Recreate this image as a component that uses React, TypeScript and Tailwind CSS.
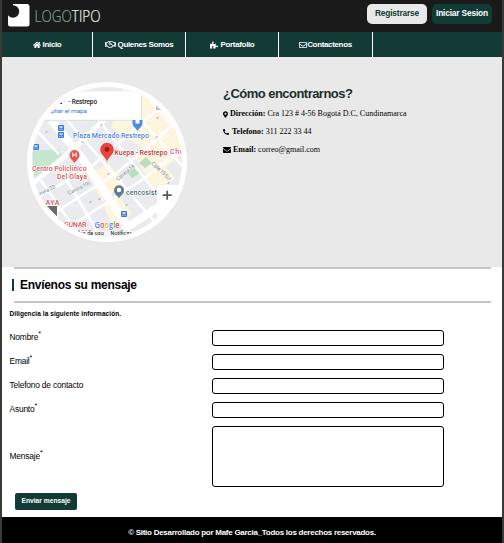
import type { ReactNode } from "react";
import {
  FaHome,
  FaRegHandshake,
  FaPuzzlePiece,
  FaRegEnvelope,
  FaMapMarkerAlt,
  FaPhoneAlt,
  FaEnvelope,
} from "react-icons/fa";

function Logo() {
  return (
    <svg width="96" height="26" viewBox="0 0 96 26" className="block">
      <rect x="0" y="1" width="21.5" height="22.5" rx="2.5" fill="#fff" />
      <circle cx="5" cy="8.5" r="6.2" fill="#1a1a1a" />
      <path d="M0 0h5v4L0 6z" fill="#1a1a1a" />
      <text x="26.5" y="19" fontFamily="'Open Sans', sans-serif" fontSize="15.5" fontWeight="300" textLength="66" lengthAdjust="spacingAndGlyphs" fill="#f2f2f2" stroke="#f2f2f2" strokeWidth=".2">
        <tspan fill="#7fa294" stroke="#7fa294">LOGO</tspan>TIPO
      </text>
    </svg>
  );
}

function Transit({ x, y }: { x: number; y: number }) {
  return (
    <g>
      <rect x={x - 3} y={y - 3} width="6" height="6" rx="1" fill="#3878d8" />
      <rect x={x - 1.6} y={y - 1.8} width="3.2" height="2" fill="#c7dcff" />
      <path d={`M${x - 1.6} ${y + 1.5}h1M${x + 0.6} ${y + 1.5}h1`} stroke="#fff" strokeWidth=".8" />
    </g>
  );
}

function MapImage() {
  return (
    <svg width="160" height="160" viewBox="27 82 160 160" className="block" fontFamily="Roboto, sans-serif">
      <defs>
        <clipPath id="disc"><circle cx="107" cy="162" r="75" /></clipPath>
      </defs>
      <circle cx="107" cy="162" r="80" fill="#fff" />
      <g clipPath="url(#disc)">
        <rect x="27" y="82" width="160" height="160" fill="#e9ebef" />
        <path d="M125 82H187V150L160 172L138 145L111 128zM88 176L108 163L124 181L103 202zM103 204L118 195L132 214L112 226zM136 158L150 148L175 178L157 196z" fill="#fef5de" />
        <path d="M32 151L58 149L62 155L35 183z" fill="#c5e6cf" />
        <path d="M139 163L146 157L152 163L145 168zM127 172L134 167L140 173L132 178z" fill="#b9dfbd" />
        <g stroke="#fff" fill="none">
          <path strokeWidth="8" d="M51 120L82 158L126 224M123 230L187 188" />
          <path strokeWidth="5" d="M32 184L71 151L105 119" />
          <path strokeWidth="2.6" d="M30 202L92 166L178 92M48 217L118 172L187 113M74 224L142 180L187 145M66 119L155 222M97 118L172 213M118 95L187 171M138 86L187 142M40 179L80 236M62 172L100 236M34 128L59 154" />
        </g>
        <path d="M30 206H187" stroke="#f6f5f1" strokeWidth=".6" />
        <g fill="#a9abc7">
          {[[46,132],[82,142],[101,125],[157,118],[156,137],[99,199],[90,202],[145,194],[126,205],[168,183],[108,174]].map(([x,y]) => (
            <path key={`${x}-${y}`} d={`M${x - 1.4} ${y + 1}l2.8-2.5v2z`} />
          ))}
        </g>
        <rect x="27" y="91.5" width="114" height="28.5" fill="#fff" />
        <path d="M27 120.3H141.3V91" stroke="#d9d9d9" strokeWidth=".8" fill="none" />
        <text x="68.5" y="104" fontSize="7" fill="#151515" stroke="#151515" strokeWidth=".15" textLength="28.5" lengthAdjust="spacingAndGlyphs">- Restrepo</text>
        <path d="M60 102.5h2v1.4h-2z" fill="#333" />
        <text x="51" y="113.2" fontSize="6" fill="#3973cb" textLength="36" lengthAdjust="spacingAndGlyphs">pliar el mapa</text>
        <Transit x={61} y={128} /><Transit x={61} y={135} />
        <Transit x={36} y={147} /><Transit x={124} y={214} />
        <path d="M132.5 120h10v3c0 4-3 4-5 8c-2-4-5-4-5-8z" fill="#4c8dea" />
        <rect x="135.5" y="119" width="4" height="4.5" fill="#fff" />
        <rect x="156" y="106" width="5" height="4" fill="#abc8c9" />
        <g fontSize="7.1" fontWeight="500" stroke="#fff" strokeWidth="1.2" paintOrder="stroke">
          <text x="73" y="137.8" fill="#4d80dc" textLength="76">Plaza Mercado Restrepo</text>
          <text x="114.5" y="154.7" fill="#c0362d" textLength="53">Kuepa - Restrepo</text>
          <text x="170" y="153.8" fill="#d45b92" textLength="18">Chos</text>
          <text x="32" y="171" fontSize="6.8" fill="#d4514b" textLength="54.5">Centro Policlínico</text>
          <text x="57" y="178.5" fontSize="6.8" fill="#d4514b" textLength="30">Del Olaya</text>
          <text x="126" y="194.5" fill="#496675" textLength="41">cencosistem</text>
          <text x="45.5" y="204.5" fill="#d4514b" textLength="14">AYA</text>
          <text x="64" y="227" fill="#d4514b" textLength="22.5">GUNAR</text>
          <text x="74" y="234" fontSize="6" fill="#d4514b" textLength="18">LACAS</text>
        </g>
        <g fill="#767b82" fontSize="5.5" stroke="#fff" strokeWidth=".7" paintOrder="stroke">
          <text transform="translate(35 198) rotate(-26)" textLength="23">Carrera 20</text>
          <text transform="translate(69 195) rotate(-27)" textLength="25">Carrera 19c</text>
          <text transform="translate(118 181) rotate(-39)" textLength="22">Carrera 18</text>
          <text transform="translate(151 164) rotate(43)" textLength="25">Calle 19 Sur</text>
        </g>
        <path d="M74.5 163c-1-2.2-5-4-5-8a5 5 0 0 1 10 0c0 4-4 5.8-5 8z" fill="#e85751" />
        <path d="M72.8 152.5v4.5m3.4-4.5v4.5m-3.4-2.2h3.4" stroke="#fff" />
        <path d="M107 162.5c0-5-6.8-7.5-6.8-13a6.8 6.8 0 0 1 13.6 0c0 5.5-6.8 8-6.8 13z" fill="#e9433b" />
        <circle cx="107" cy="149.5" r="2.4" fill="#9a1d1c" />
        <path d="M119 198.5c-1-3-5-4-5-8.3a5 5 0 0 1 10 0c0 4.3-4 5.3-5 8.3z" fill="#607f8e" />
        <circle cx="119" cy="190" r="2.2" fill="#fff" />
        <path d="M46 205.5h11.5v12z" fill="#6b6b6b" stroke="#fff" />
        <path d="M157 185h30v28h-16l-14 16z" fill="#fff" />
        <path d="M162.7 195.2h9M167.2 190.8v9" stroke="#585858" strokeWidth="1.7" />
        <path d="M80 231h57v10H80z" fill="#f7f7f7" />
        <text x="79.5" y="235.3" fontSize="5.4" fill="#111" textLength="24.5">os de uso</text>
        <text x="110.5" y="235" fontSize="5.4" fill="#111" textLength="25">Notificar e</text>
        <text x="94.5" y="227.5" fontFamily="'Open Sans', sans-serif" fontSize="8" fontWeight="600" textLength="25" lengthAdjust="spacingAndGlyphs" stroke="#fff" strokeWidth="1.2" paintOrder="stroke">
          <tspan fill="#4285f4">G</tspan><tspan fill="#ea4335">o</tspan><tspan fill="#eab308">o</tspan><tspan fill="#4285f4">g</tspan><tspan fill="#34a853">l</tspan><tspan fill="#ea4335">e</tspan>
        </text>
      </g>
    </svg>
  );
}

function NavItem({ className, children }: { className: string; children: ReactNode }) {
  return (
    <a className={`flex h-full items-center justify-center border-r border-white text-[8px] font-bold leading-none text-white ${className}`}>
      {children}
    </a>
  );
}

function Row({ label, required, big }: { label: string; required?: boolean; big?: boolean }) {
  return (
    <div className="flex items-center">
      <label className="-ml-[0.5px] w-[202.5px] shrink-0 pb-px text-[8.4px] leading-none tracking-[-0.18px]">
        {label}
        {required && <sup className="relative -top-[4px] text-[7px] leading-none">*</sup>}
      </label>
      {big ? (
        <textarea className="block h-[61px] w-[232px] resize-none rounded-[3px] border border-black bg-white" />
      ) : (
        <input className="block h-4 w-[232px] rounded-[3px] border border-black bg-white" />
      )}
    </div>
  );
}

export default function App() {
  return (
    <div className="h-[543px] w-[504px] overflow-hidden border-x-2 border-[#393a36] bg-white font-['Liberation_Sans',Arial,sans-serif] text-black">
      <header className="flex h-8 justify-between bg-[#1a1a1a] pl-[6px] pr-[10px] pt-[3px]">
        <Logo />
        <div className="flex gap-[5px] pt-px text-[8.4px] font-bold leading-none tracking-[-0.18px]">
          <button className="h-5 w-[60px] rounded-[5px] bg-[#e9e9e9] pb-px text-[#123b35]">Registrarse</button>
          <button className="h-5 w-[60px] whitespace-nowrap rounded-[5px] bg-[#123b35] pb-px text-white">Iniciar Sesion</button>
        </div>
      </header>

      <nav className="flex h-[25px] bg-[#123b35] tracking-[-0.35px]">
        <NavItem className="w-[91px] gap-[2px]"><FaHome size={8} />Inicio</NavItem>
        <NavItem className="w-[93px] gap-[2px]"><FaRegHandshake size={11} />Quienes Somos</NavItem>
        <NavItem className="w-[93px] gap-[3px]"><FaPuzzlePiece size={8} />Portafolio</NavItem>
        <NavItem className="w-[94px]"><FaRegEnvelope size={8} />Contactenos</NavItem>
      </nav>

      <section className="flex h-[210px] gap-[35px] bg-[#e9e9e9] pl-[25px] pt-[25px]">
        <MapImage />
        <div className="pl-[1px] pt-[5px]">
          <h2 className="text-[13px] font-bold leading-[14px] tracking-[-0.53px] text-[#1d2d2b]">¿Cómo encontrarnos?</h2>
          <div className="mt-[8px] flex flex-col gap-[8px] whitespace-nowrap font-['Liberation_Serif',serif] text-[8px] leading-[10px]">
            <p className="flex items-center gap-[3px]"><FaMapMarkerAlt size={7} className="-mr-[1px] w-[5px]" /><span><b>Dirección:</b> Cra 123 # 4-56 Bogotá D.C, Cundinamarca</span></p>
            <p className="flex items-center gap-[3px]"><FaPhoneAlt size={6} /><span><b>Telefono:</b> 311 222 33 44</span></p>
            <p className="flex items-center gap-[2px]"><FaEnvelope size={8} /><span><b>Email:</b> correo@gmail.com</span></p>
          </div>
        </div>
      </section>

      <main className="h-[250px]">
        <div className="ml-3 mr-[11px] flex h-9 items-center border-y-2 border-[#c5c5c5]">
          <h2 className="-ml-[2px] border-l-2 border-[#123b35] pl-[6px] text-[12px] font-bold leading-3 tracking-[-0.28px]">Envíenos su mensaje</h2>
        </div>
        <form className="pl-2 pt-[7px]">
          <p className="-ml-[0.5px] text-[6.5px] font-bold leading-[7px] tracking-[0.07px]">Diligencia la siguiente información.</p>
          <div className="mt-[13px] flex flex-col gap-2">
            <Row label="Nombre" required />
            <Row label="Email" required />
            <Row label="Telefono de contacto" />
            <Row label="Asunto" required />
            <Row label="Mensaje" required big />
          </div>
          <button type="button" className="ml-[5px] mt-[6px] block h-[17px] w-[62px] rounded-[2px] bg-[#123b35] text-[6.7px] font-bold leading-none text-white">Enviar mensaje</button>
        </form>
      </main>

      <footer className="flex h-[26px] items-center justify-center bg-black pt-[5px] text-[8px] font-bold leading-none tracking-[-0.27px] text-white">
        © Sitio Desarrollado por Mafe Garcia_Todos los derechos reservados.
      </footer>
    </div>
  );
}
